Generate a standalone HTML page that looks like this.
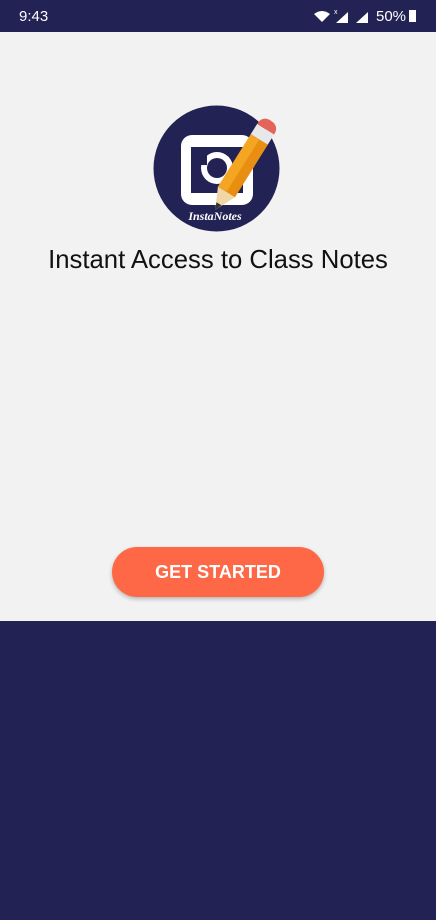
<!DOCTYPE html>
<html><head><style>
body{margin:0;width:436px;height:920px;background:#f2f2f2;font-family:"Liberation Sans",Roboto,sans-serif;position:relative;overflow:hidden}
.sb{position:absolute;top:0;left:0;width:436px;height:32px;background:#222254;color:#fff;font-size:15px}
.bottom{position:absolute;top:621px;left:0;width:436px;height:299px;background:#222254}
h1{position:absolute;top:246px;left:0;width:436px;text-align:center;font-weight:normal;font-size:25.7px;margin:0;color:#111}
.btn{position:absolute;left:112px;top:547px;width:212px;height:50px;border-radius:25px;background:#fe6847;color:#fff;font-size:18px;font-weight:bold;text-align:center;line-height:50px;box-shadow:0 2px 4px rgba(0,0,0,.25)}
</style></head><body>
<div class="sb"><span style="position:absolute;left:19px;top:8px">9:43</span>
<svg style="position:absolute;left:312px;top:8px" width="80" height="16">
<path d="M2 6 Q10 0 18 6 L10 14Z" fill="#fff"/><text x="22" y="6" font-size="7" fill="#fff" font-family="Liberation Sans">x</text>
<path d="M24 15 L36 4 L36 15Z" fill="#fff"/><path d="M44 15 L56 4 L56 15Z" fill="#fff"/></svg>
<span style="position:absolute;left:376px;top:8px">50%</span>
<div style="position:absolute;left:409px;top:10px;width:7px;height:12px;background:#fff"></div></div>
<svg style="position:absolute;left:153px;top:105px" width="127" height="127" viewBox="0 0 127 127">
<circle cx="63.5" cy="63.5" r="63" fill="#222254"/>
<rect x="28" y="30" width="72" height="70" rx="11" fill="#fff"/>
<rect x="38" y="42" width="52" height="46" fill="#222254"/>
<circle cx="64" cy="63" r="16" fill="#fff"/><circle cx="64" cy="63" r="10" fill="#222254"/>
<rect x="40" y="44" width="14" height="16" fill="#222254"/>
<g transform="rotate(32 84 70)">
<rect x="74" y="28" width="20" height="62" fill="#f4a623"/>
<rect x="84" y="28" width="10" height="62" fill="#e88f12"/>
<rect x="74" y="16" width="20" height="12" fill="#e8e8e8"/>
<path d="M74 16 Q74 6 84 6 Q94 6 94 16Z" fill="#e5645a"/>
<path d="M74 90 L94 90 L84 111Z" fill="#f1d7a6"/><path d="M81 104 L87 104 L84 111Z" fill="#333"/>
</g>
<text x="62" y="115" text-anchor="middle" font-family="Liberation Serif" font-style="italic" font-weight="bold" font-size="12" fill="#fff">InstaNotes</text>
</svg>
<h1>Instant Access to Class Notes</h1>
<div class="btn">GET STARTED</div>
<div class="bottom"></div>
</body></html>
